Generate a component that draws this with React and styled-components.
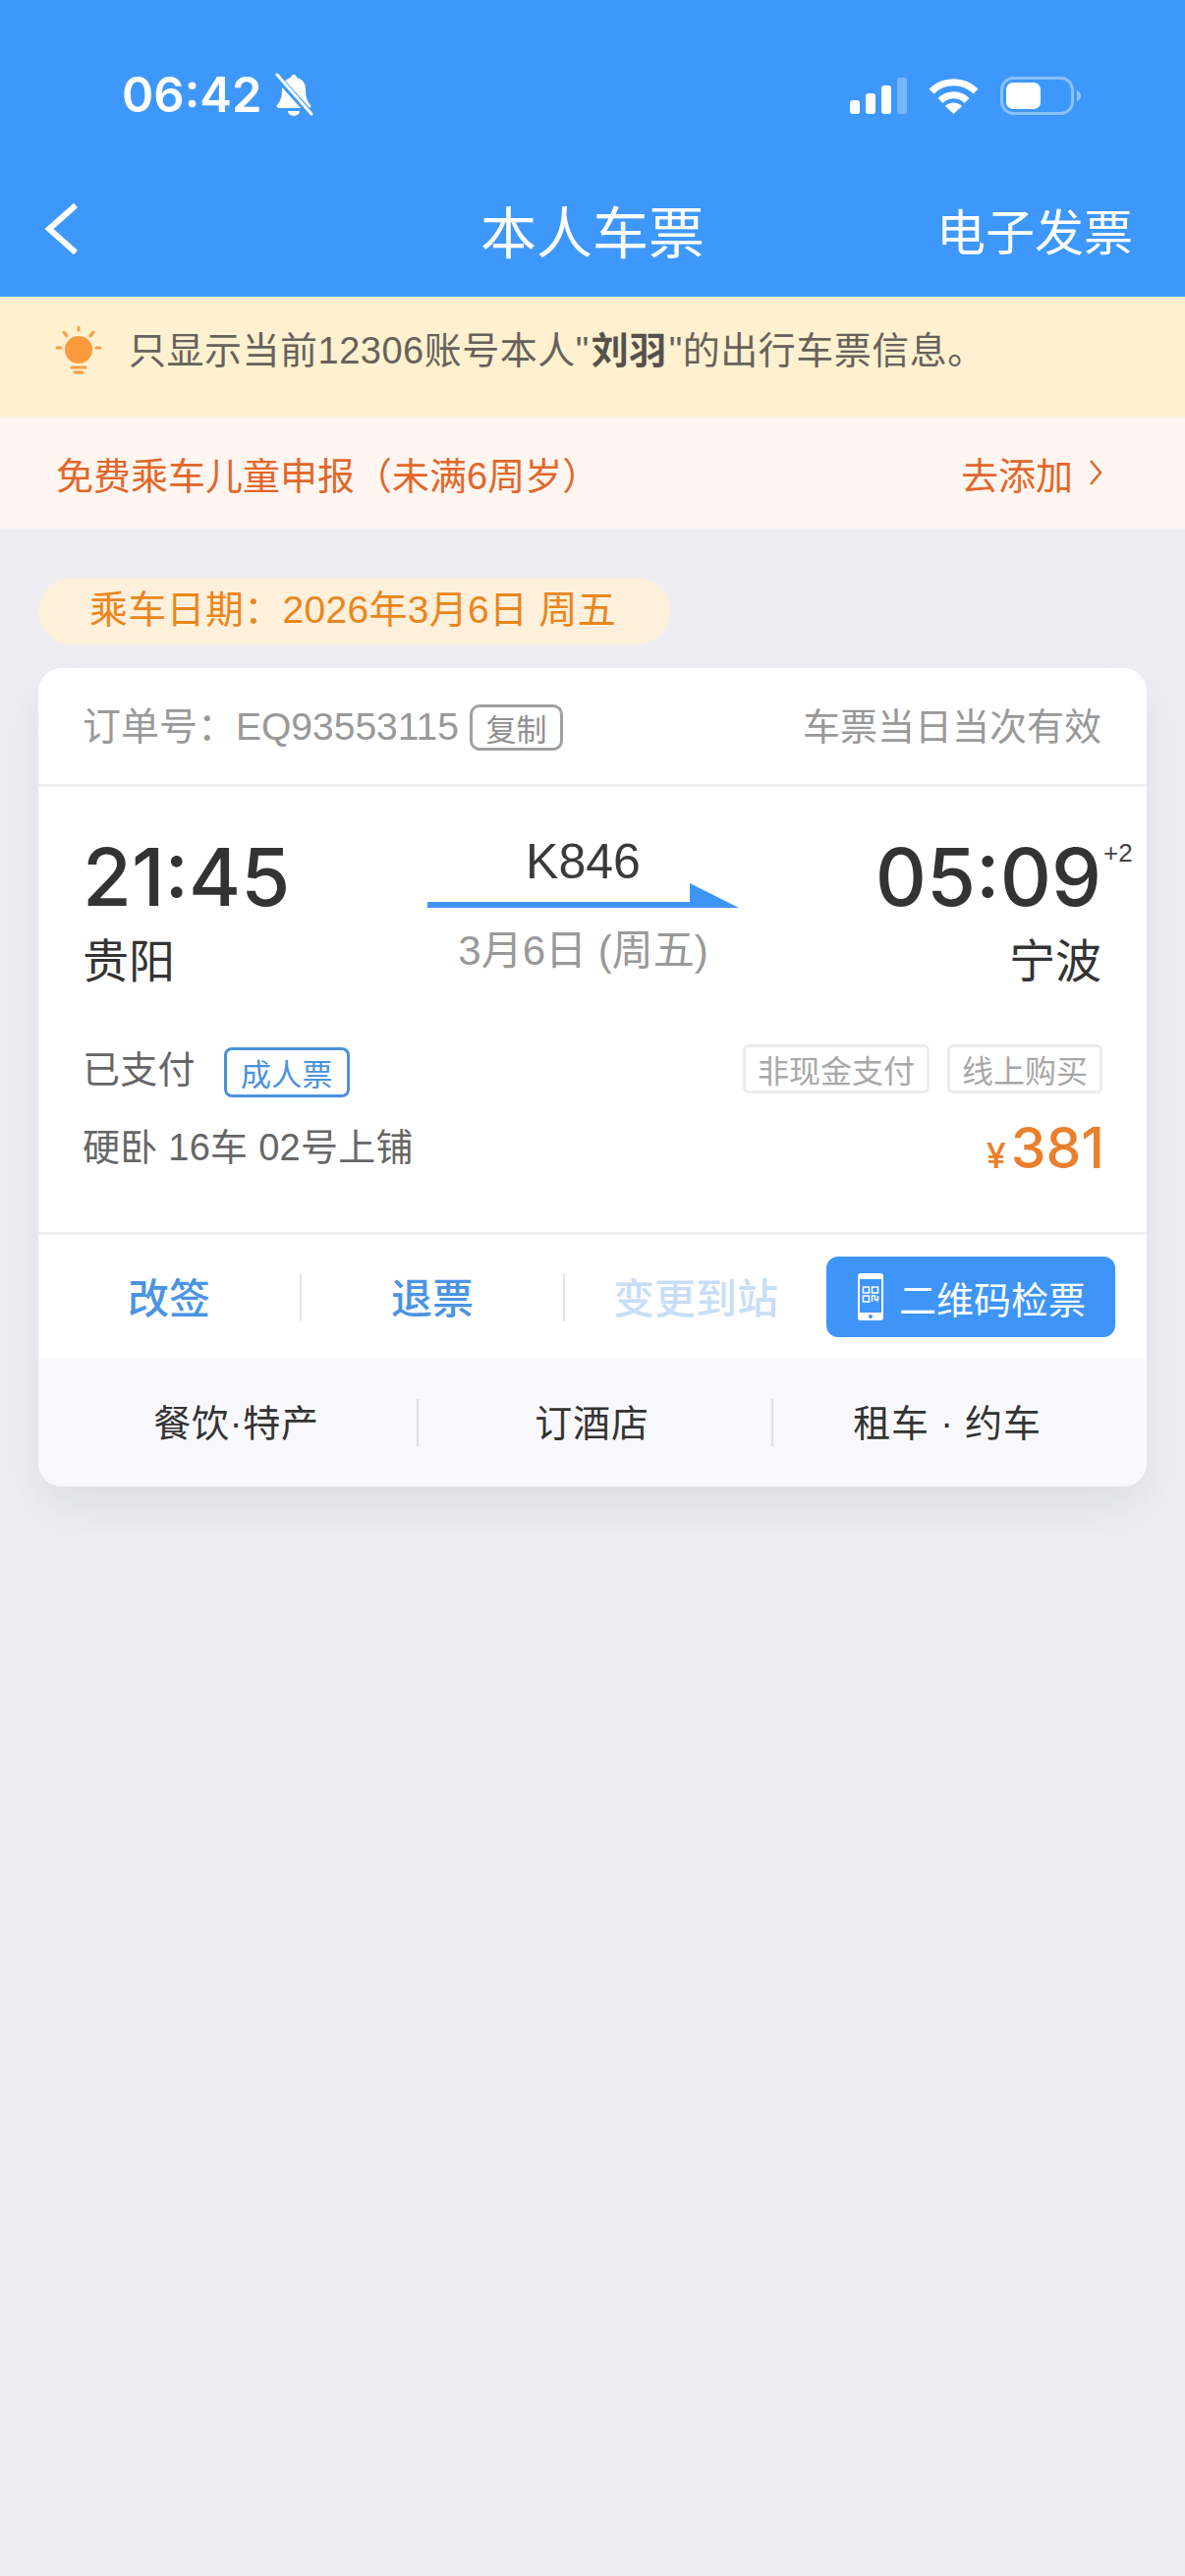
import React from "react";
import styled, { createGlobalStyle } from "styled-components";

const GlobalStyle = createGlobalStyle`
  html, body {
    margin: 0;
    padding: 0;
    background: #eeeef3;
  }
  body {
    font-family: "Liberation Sans", "Noto Sans CJK SC", sans-serif;
  }
  * {
    box-sizing: border-box;
  }
`;

const Page = styled.div`
  width: 1206px;
  min-height: 2622px;
  background: #eeeef3;
`;

/* header */
const Header = styled.header`
  height: 302px;
  padding-top: 72px;
  background: #3e98fc;
  color: #fff;
`;

const StatusBar = styled.div`
  height: 50px;
  padding: 0 106px 0 124px;
  display: flex;
  align-items: center;
  justify-content: space-between;
`;

const StatusLeft = styled.div`
  display: flex;
  align-items: center;
  gap: 12px;
`;

const StatusRight = styled.div`
  display: flex;
  align-items: center;
  gap: 22px;
`;

const Clock = styled.span`
  font-family: Inter, sans-serif;
  font-weight: 600;
  font-size: 49px;
  line-height: 50px;
`;

const NavBar = styled.div`
  margin-top: 70px;
  height: 82px;
  padding: 0 53px;
  display: grid;
  grid-template-columns: 1fr auto 1fr;
  align-items: center;
`;

const BackIcon = styled.svg`
  display: block;
  margin-left: -8px;
`;

const NavTitle = styled.div`
  margin-top: 10px;
  font-size: 57px;
  line-height: 72px;
`;

const NavLink = styled.div`
  margin-top: 10px;
  font-size: 50px;
  line-height: 72px;
  text-align: right;
`;

/* notices */
const TipBar = styled.div`
  height: 122px;
  padding: 30px 0 0 56px;
  display: flex;
  align-items: flex-start;
  gap: 27px;
  background: #fff1cf;
`;

const TipText = styled.div`
  font-size: 38px;
  line-height: 50px;
  letter-spacing: 0.5px;
  color: #66625c;
  white-space: nowrap;
  b {
    padding: 0 2px;
    color: #55514c;
  }
`;

const ChildBar = styled.div`
  height: 114px;
  padding: 0 84px 0 57px;
  display: flex;
  align-items: center;
  justify-content: space-between;
  background: #fff6f1;
  color: #e2672b;
  font-size: 38px;
`;

const AddLink = styled.div`
  display: flex;
  align-items: center;
  gap: 16px;
`;

/* main */
const Main = styled.main`
  padding: 50px 39px 0;
`;

const DatePill = styled.div`
  width: 643px;
  height: 68px;
  margin-bottom: 24px;
  padding: 0 0 10px 52px;
  display: flex;
  align-items: center;
  border-radius: 34px;
  background: #fff0dc;
  color: #ea861c;
  font-size: 39px;
  letter-spacing: 0.3px;
  white-space: nowrap;
`;

const Card = styled.section`
  width: 1128px;
  border-radius: 24px;
  overflow: hidden;
  background: #fff;
`;

const CardShadow = styled.div`
  width: 1128px;
  border-radius: 24px;
  box-shadow: 0 22px 48px rgba(60, 60, 90, 0.09);
`;

const OrderRow = styled.div`
  height: 121px;
  padding: 0 46px 6px 45px;
  display: flex;
  align-items: center;
  justify-content: space-between;
  border-bottom: 3px solid #f0f0f2;
  font-size: 38px;
  color: #999;
`;

const OrderNo = styled.div`
  display: flex;
  align-items: center;
  gap: 11px;
  span {
    font-size: 39px;
  }
`;

const CopyTag = styled.em`
  width: 95px;
  height: 47px;
  margin-top: 9px;
  display: flex;
  align-items: center;
  justify-content: center;
  border: 3px solid #a0a0a0;
  border-radius: 10px;
  font-size: 31px;
  font-style: normal;
  color: #8f8f8f;
`;

const Route = styled.div`
  padding: 50px 46px 0 45px;
  display: grid;
  grid-template-columns: 351px 317px 1fr;
`;

const Stop = styled.div`
  display: flex;
  flex-direction: column;
  align-items: ${(p) => (p.$end ? "flex-end" : "flex-start")};
`;

const Time = styled.div`
  position: relative;
  font-family: Inter, sans-serif;
  font-weight: 500;
  font-size: 81px;
  line-height: 84px;
  color: #333;
`;

const DayOffset = styled.span`
  position: absolute;
  left: 100%;
  top: 4px;
  margin-left: 2px;
  font-family: "Liberation Sans", sans-serif;
  font-weight: 400;
  font-size: 26px;
  line-height: 26px;
  color: #444;
`;

const City = styled.div`
  margin-top: 14px;
  font-size: 47px;
  line-height: 60px;
  color: #333;
`;

const Train = styled.div`
  display: flex;
  flex-direction: column;
  align-items: center;
  padding-top: 3px;
`;

const TrainNo = styled.div`
  font-size: 50px;
  line-height: 46px;
  color: #3a3a3a;
`;

const RouteArrow = styled.svg`
  display: block;
  margin-top: -1px;
`;

const TrainDate = styled.div`
  margin-top: 19px;
  font-size: 42px;
  line-height: 50px;
  color: #999;
`;

const InfoRow = styled.div`
  height: ${(p) => p.$h}px;
  margin-top: ${(p) => p.$top}px;
  padding: 0 45px ${(p) => p.$lift}px;
  display: flex;
  align-items: center;
  justify-content: space-between;
  font-size: 38px;
  color: #666;
  letter-spacing: 0.25px;
`;

const PayState = styled.div`
  display: flex;
  align-items: center;
  gap: 29px;
`;

const TicketTag = styled.span`
  width: 128px;
  height: 51px;
  margin-top: 12px;
  display: flex;
  align-items: center;
  justify-content: center;
  border: 3px solid #4a92dc;
  border-radius: 8px;
  font-size: 31px;
  color: #4a92dc;
`;

const Marks = styled.div`
  margin-top: 6px;
  display: flex;
  gap: 18px;
`;

const Mark = styled.span`
  height: 50px;
  padding: 0 12px;
  display: flex;
  align-items: center;
  border: 3px solid #ececec;
  border-radius: 6px;
  font-size: 32px;
  letter-spacing: 0;
  color: #a8a8a8;
`;

const Price = styled.div`
  margin: 16px -2px 0 0;
  display: flex;
  align-items: baseline;
  gap: 5px;
  color: #ea7f2c;
  font-family: Inter, sans-serif;
  font-weight: 500;
  font-size: 57px;
  line-height: 60px;
  letter-spacing: 0;
  small {
    font-size: 36px;
  }
`;

const Actions = styled.div`
  height: 129px;
  margin-top: 55px;
  padding-right: 32px;
  display: flex;
  align-items: center;
  border-top: 3px solid #f0f0f2;
`;

const ActionCell = styled.div`
  flex: 1;
  padding-bottom: 4px;
  text-align: center;
  font-size: 42px;
  font-weight: 500;
  color: ${(p) => (p.$off ? "#c8def6" : "#4a94e4")};
`;

const Sep = styled.span`
  flex: none;
  width: 2px;
  height: 49px;
  background: #e6e6ea;
`;

const QrButton = styled.div`
  flex: none;
  width: 294px;
  height: 82px;
  padding-left: 32px;
  display: flex;
  align-items: center;
  gap: 16px;
  border-radius: 12px;
  background: #3e95f7;
  color: #fff;
  font-size: 38px;
`;

const Extras = styled.div`
  height: 130px;
  display: grid;
  grid-template-columns: 385px 361px 1fr;
  align-items: center;
  background: #f9f9fd;
  font-size: 38px;
  letter-spacing: 0.8px;
  color: #333;
`;

const ExtraCell = styled.div`
  height: 48px;
  padding: 0 ${(p) => p.$right || 0}px 0 ${(p) => p.$left || 0}px;
  display: flex;
  align-items: center;
  justify-content: center;
  border-left: ${(p) => (p.$line ? "2px solid #dedee3" : "none")};
  span {
    padding-bottom: 6px;
  }
`;

const Bell = () => (
  <svg width="42" height="46" viewBox="0 0 42 46">
    <path
      d="M21 2c2 0 3 1.400 3 3 6 1.500 9 6 9 12 0 7 1 11 5 16 1 1.500 0 3-2 3H6c-2 0-3-1.500-2-3 4-5 5-9 5-16 0-6 3-10.500 9-12 0-1.600 1-3 3-3z"
      fill="#fff"
    />
    <path d="M15 39h12a6 5 0 0 1-12 0z" fill="#fff" />
    <path d="M3 3l36 40" stroke="#3e98fc" strokeWidth="7" />
    <path d="M4 2l35 40" stroke="#fff" strokeWidth="3" strokeLinecap="round" />
  </svg>
);

const Signal = () => (
  <svg width="58" height="37" viewBox="0 0 58 37">
    <rect x="0" y="23" width="10" height="14" rx="3" fill="#fff" />
    <rect x="16" y="16" width="10" height="21" rx="3" fill="#fff" />
    <rect x="32" y="8" width="10" height="29" rx="3" fill="#fff" />
    <rect x="48" y="0" width="10" height="37" rx="3" fill="#fff" opacity="0.3" />
  </svg>
);

const Wifi = () => (
  <svg width="51" height="37" viewBox="0 0 51 37">
    <path d="M3 14a32 32 0 0 1 45 0" fill="none" stroke="#fff" strokeWidth="7" />
    <path d="M12 23.500a19 19 0 0 1 27 0" fill="none" stroke="#fff" strokeWidth="7" />
    <path d="M17 29a12 12 0 0 1 17 0l-8.500 8z" fill="#fff" />
  </svg>
);

const Battery = () => (
  <svg width="82" height="39" viewBox="0 0 82 39">
    <rect x="1.500" y="1.500" width="72" height="36" rx="12" fill="none" stroke="#fff" strokeOpacity="0.4" strokeWidth="3" />
    <rect x="6" y="6" width="35" height="27" rx="7" fill="#fff" />
    <path d="M78 14c2.500 1 4 3 4 5.500s-1.500 4.500-4 5.500z" fill="#fff" fillOpacity="0.45" />
  </svg>
);

const Bulb = () => (
  <svg width="48" height="50" viewBox="0 0 48 50" fill="none" stroke="#fb9d45" strokeWidth="3" strokeLinecap="round">
    <circle cx="24" cy="24" r="14" fill="#fb9a3c" stroke="none" />
    <path d="M24 1v3M9 6l3 4M39 6l-3 4M2 22h4M46 22h-4" />
    <path d="M17 42h14M20 47h8" />
  </svg>
);

const PhoneQr = () => (
  <svg width="26" height="48" viewBox="0 0 26 48">
    <rect width="26" height="48" rx="3" fill="#fff" />
    <rect x="2" y="6" width="22" height="34" fill="#3e95f7" />
    <circle cx="13" cy="44" r="2" fill="#3e95f7" />
    <g fill="none" stroke="#fff" strokeWidth="1.500">
      <rect x="5.500" y="14" width="6" height="6" />
      <rect x="14.500" y="14" width="6" height="6" />
      <rect x="5.500" y="23" width="6" height="6" />
      <path d="M14.500 29v-6h3v4h3v-4M20.500 29h-1" />
    </g>
  </svg>
);

export default function App() {
  return (
    <Page>
      <GlobalStyle />
      <Header>
        <StatusBar>
          <StatusLeft>
            <Clock>06:42</Clock>
            <Bell />
          </StatusLeft>
          <StatusRight>
            <Signal />
            <Wifi />
            <Battery />
          </StatusRight>
        </StatusBar>
        <NavBar>
          <BackIcon width="36" height="54" viewBox="0 0 36 54">
            <path d="M32 3L5 27l27 24" fill="none" stroke="#fff" strokeWidth="6" />
          </BackIcon>
          <NavTitle>本人车票</NavTitle>
          <NavLink>电子发票</NavLink>
        </NavBar>
      </Header>

      <TipBar>
        <Bulb />
        <TipText>
          只显示当前12306账号本人"<b>刘羽</b>"的出行车票信息。
        </TipText>
      </TipBar>

      <ChildBar>
        <span>{"免费乘车儿童申报\uFF08未满6周岁\uFF09"}</span>
        <AddLink>
          去添加
          <svg width="14" height="28" viewBox="0 0 14 28">
            <path d="M2 2l10 12L2 26" fill="none" stroke="#e2672b" strokeWidth="2.500" />
          </svg>
        </AddLink>
      </ChildBar>

      <Main>
        <DatePill>{"乘车日期\uFF1A2026年3月6日 周五"}</DatePill>
        <CardShadow>
          <Card>
            <OrderRow>
              <OrderNo>
                <span>{"订单号\uFF1AEQ93553115"}</span>
                <CopyTag>复制</CopyTag>
              </OrderNo>
              <span>车票当日当次有效</span>
            </OrderRow>

            <Route>
              <Stop>
                <Time>21:45</Time>
                <City>贵阳</City>
              </Stop>
              <Train>
                <TrainNo>K846</TrainNo>
                <RouteArrow width="317" height="25" viewBox="0 0 317 25">
                  <path d="M0 19h267V0l50 25H0z" fill="#3e95f7" />
                </RouteArrow>
                <TrainDate>3月6日 (周五)</TrainDate>
              </Train>
              <Stop $end>
                <Time>
                  05:09
                  <DayOffset>+2</DayOffset>
                </Time>
                <City>宁波</City>
              </Stop>
            </Route>

            <InfoRow $h={52} $top={53} $lift={6}>
              <PayState>
                已支付
                <TicketTag>成人票</TicketTag>
              </PayState>
              <Marks>
                <Mark>非现金支付</Mark>
                <Mark>线上购买</Mark>
              </Marks>
            </InfoRow>
            <InfoRow $h={60} $top={25} $lift={10}>
              <span>硬卧 16车 02号上铺</span>
              <Price>
                <small>¥</small>381
              </Price>
            </InfoRow>

            <Actions>
              <ActionCell>改签</ActionCell>
              <Sep />
              <ActionCell>退票</ActionCell>
              <Sep />
              <ActionCell $off>变更到站</ActionCell>
              <QrButton>
                <PhoneQr />
                二维码检票
              </QrButton>
            </Actions>

            <Extras>
              <ExtraCell $left={18}>
                <span>餐饮·特产</span>
              </ExtraCell>
              <ExtraCell $line $right={6}>
                <span>订酒店</span>
              </ExtraCell>
              <ExtraCell $line $right={26}>
                <span>租车 · 约车</span>
              </ExtraCell>
            </Extras>
          </Card>
        </CardShadow>
      </Main>
    </Page>
  );
}
